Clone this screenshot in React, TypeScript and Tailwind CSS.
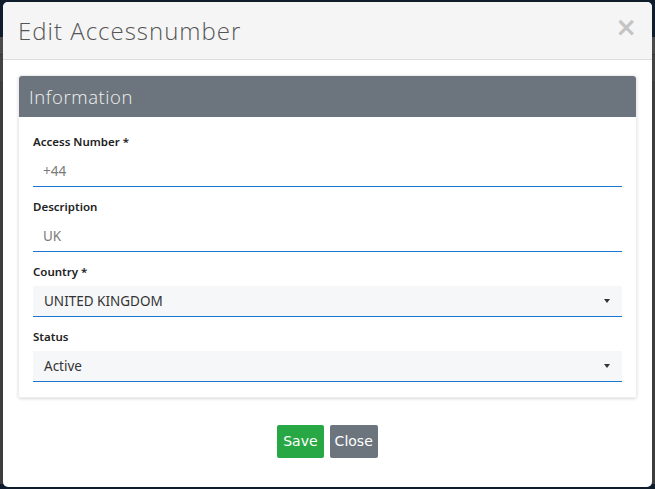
import React from 'react';

const Field: React.FC<{ label: string; value: string; select?: boolean }> = ({ label, value, select }) => (
  <div className="flex flex-col shrink-0">
    <label className="text-[11.5px] font-semibold text-[#222] h-[20px] leading-[20px] mb-[4px]">{label}</label>
    <div
      className={`h-[31px] flex items-center justify-between border-b border-solid border-b-[#1976d2] ${
        select ? 'bg-[#f6f7f9] pl-[11px] pr-[12px] text-[#333]' : 'pl-[10px] text-[#7a7a7a]'
      } text-[13.5px]`}
    >
      <span>{value}</span>
      {select && (
        <span className="w-0 h-0 border-l-[3px] border-r-[3px] border-t-[4px] border-l-transparent border-r-transparent border-t-[#333]" />
      )}
    </div>
  </div>
);

export default function App() {
  return (
    <div className="relative w-[655px] h-[489px] overflow-hidden bg-[#474747]" style={{ fontFamily: '"Noto Sans", sans-serif' }}>
      {/* dimmed page behind the modal */}
      <div className="flex flex-col h-full">
        <div className="h-[37px] bg-[#0f1c2c]" />
        <div className="h-[18px] bg-[#4a4a4a] border-b border-[#2f3b33]" />
        <div className="h-[28px] bg-[#434343] border-b border-[#2f3b33]" />
        <div className="flex-1 bg-[#3d3d3d]" />
        <div className="h-[5px] bg-[#0f1c2c]" />
      </div>

      <div className="absolute left-[3px] top-[2px] w-[649px] h-[485px] bg-white rounded-[5px] overflow-hidden flex flex-col">
        {/* header */}
        <div className="h-[58px] shrink-0 bg-[#f5f5f5] border-b border-[#dddddd] flex items-center justify-between pl-[15px] pr-[15px]">
          <h1 className="text-[24px] font-light text-[#555] tracking-[1px]" style={{ fontFamily: '"Open Sans", sans-serif' }}>
            Edit Accessnumber
          </h1>
          <span className="text-[26px] font-bold text-[#c4c4c4] leading-none -mt-[8px]" style={{ fontFamily: '"DejaVu Sans", sans-serif' }}>×</span>
        </div>

        {/* body */}
        <div className="px-[15px] pt-[15px] shrink-0">
          <div className="rounded-[3px] shadow-[0_1px_3px_rgba(0,0,0,0.15)] border border-[#eeeeee]">
            <div className="h-[41px] bg-[#6c757d] rounded-t-[3px] flex items-center pl-[10px]">
              <span className="text-[18.5px] font-light text-[#f1f1f1] tracking-[0.6px]" style={{ fontFamily: '"Open Sans", sans-serif' }}>Information</span>
            </div>
            <div className="px-[14px] pt-[15px] pb-[15px] flex flex-col gap-[10px]">
              <Field label="Access Number *" value="+44" />
              <Field label="Description" value="UK" />
              <Field label="Country *" value="UNITED KINGDOM" select />
              <Field label="Status" value="Active" select />
            </div>
          </div>
        </div>

        {/* footer */}
        <div className="flex justify-center gap-[6px] mt-[27px] shrink-0">
          <button className="h-[33px] px-[6px] bg-[#28a745] text-white text-[14px] rounded-[2px]" style={{ fontFamily: '"DejaVu Sans", sans-serif' }}>
            Save
          </button>
          <button className="h-[33px] px-[5px] bg-[#6c757d] text-white text-[14px] rounded-[2px]" style={{ fontFamily: '"DejaVu Sans", sans-serif' }}>
            Close
          </button>
        </div>
      </div>
    </div>
  );
}
